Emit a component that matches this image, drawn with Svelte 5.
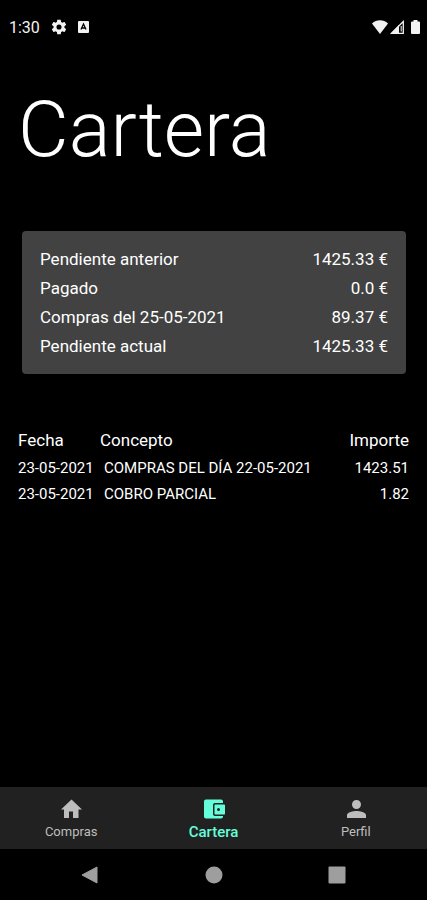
<script lang="ts">
	type Movimiento = { fecha: string; concepto: string; importe: string };

	const resumen = [
		{ label: 'Pendiente anterior', importe: '1425.33 €' },
		{ label: 'Pagado', importe: '0.0 €' },
		{ label: 'Compras del 25-05-2021', importe: '89.37 €' },
		{ label: 'Pendiente actual', importe: '1425.33 €' }
	];

	const movimientos: Movimiento[] = [
		{ fecha: '23-05-2021', concepto: 'COMPRAS DEL DÍA 22-05-2021', importe: '1423.51' },
		{ fecha: '23-05-2021', concepto: 'COBRO PARCIAL', importe: '1.82' }
	];

	const tabs = [
		{ id: 'compras', label: 'Compras', icon: 'M10 21v-6.500h4V21h5.500v-8.500H23L12.500 2.500 2 12.500h3V21z' },
		{
			id: 'cartera',
			label: 'Cartera',
			icon: 'M20 2.500H5c-1.100 0-2 .9-2 2v15c0 1.100.9 2 2 2h15c1.100 0 2-.9 2-2V19h-8c-1.100 0-2-.9-2-2V8c0-1.100.9-2 2-2h8V4.500c0-1.100-.9-2-2-2zM14.500 7.500c-.6 0-1 .4-1 1v8c0 .6.4 1 1 1H23c.6 0 1-.4 1-1v-8c0-.6-.4-1-1-1zM17.500 14a1.500 1.500 0 1 1 0-3 1.500 1.500 0 0 1 0 3z'
		},
		{
			id: 'perfil',
			label: 'Perfil',
			icon: 'M12.500 12c2.600 0 4.500-2 4.500-4.500S15.100 3 12.500 3 8 5 8 7.500 9.900 12 12.500 12zm0 2c-3 0-9.500 1.300-9.500 4v3h19v-3c0-2.700-6.500-4-9.500-4z'
		}
	];

	let activeTab = $state('cartera');
</script>

<div class="screen">
	<header class="status-bar">
		<span class="clock">1:30</span>
		<svg width="16" height="16" viewBox="1 1 22 22" aria-hidden="true">
			<path
				fill="currentColor"
				fill-rule="evenodd"
				d="M19.430 12.980c.04-.32.07-.64.07-.98s-.03-.66-.07-.98l2.110-1.650c.19-.15.24-.42.12-.64l-2-3.460c-.12-.22-.39-.3-.61-.22l-2.490 1c-.52-.4-1.080-.73-1.690-.98l-.38-2.650C14.460 2.180 14.250 2 14 2h-4c-.25 0-.46.18-.49.42l-.38 2.650c-.61.25-1.170.59-1.690.98l-2.490-1c-.23-.09-.49 0-.61.22l-2 3.460c-.13.22-.07.49.12.64l2.110 1.650c-.04.32-.07.65-.07.98s.03.66.07.98l-2.110 1.650c-.19.15-.24.42-.12.64l2 3.460c.12.22.39.3.61.22l2.490-1c.52.4 1.080.73 1.690.98l.38 2.650c.03.24.24.42.49.42h4c.25 0 .46-.18.49-.42l.38-2.650c.61-.25 1.170-.59 1.690-.98l2.490 1c.23.09.49 0 .61-.22l2-3.460c.12-.22.07-.49-.12-.64zM12 15.500a3.500 3.500 0 1 1 0-7 3.500 3.500 0 0 1 0 7z"
			/>
		</svg>
		<svg width="11" height="12" viewBox="0 0 11 12" aria-hidden="true">
			<rect width="11" height="12" rx="1" fill="currentColor" />
			<path d="M3 8.500 5.500 3 8 8.500M4 7h3" fill="none" stroke="#000" stroke-width="1.300" />
		</svg>
		<div class="signals">
			<svg width="16" height="14" viewBox="0 0 16 14" aria-hidden="true">
				<path d="M0 3.500C4.500-.8 11.500-.8 16 3.500L8 14z" fill="currentColor" />
			</svg>
			<svg width="14" height="14" viewBox="0 0 14 14" aria-hidden="true">
				<path d="M1.500 13.300 13.300 1.500v11.800z" fill="none" stroke="currentColor" stroke-width="1.300" />
				<path d="M1 13.500 9 5v8.500z" fill="currentColor" />
				<path d="M11.200 6v5.500" stroke="currentColor" />
			</svg>
			<svg class="battery" width="9" height="14" viewBox="0 0 9 14" aria-hidden="true">
				<path d="M2.500 0h4v1.500H8q1 0 1 1V13q0 1-1 1H1q-1 0-1-1V2.500q0-1 1-1h1.500z" fill="currentColor" />
			</svg>
		</div>
	</header>

	<main>
		<h1>Cartera</h1>

		<dl class="resumen">
			{#each resumen as linea}
				<div class="linea">
					<dt>{linea.label}</dt>
					<dd>{linea.importe}</dd>
				</div>
			{/each}
		</dl>

		<table>
			<thead>
				<tr>
					<th class="fecha">Fecha</th>
					<th>Concepto</th>
					<th class="importe">Importe</th>
				</tr>
			</thead>
			<tbody>
				{#each movimientos as mov}
					<tr>
						<td class="fecha">{mov.fecha}</td>
						<td class="concepto">{mov.concepto}</td>
						<td class="importe">{mov.importe}</td>
					</tr>
				{/each}
			</tbody>
		</table>
	</main>

	<nav class="tabs">
		{#each tabs as tab}
			<button
				class="tab"
				class:active={activeTab === tab.id}
				aria-current={activeTab === tab.id ? 'page' : undefined}
				onclick={() => (activeTab = tab.id)}
			>
				<svg viewBox="0 0 24 24" aria-hidden="true">
					<path d={tab.icon} fill="currentColor" fill-rule="evenodd" />
				</svg>
				<span>{tab.label}</span>
			</button>
		{/each}
	</nav>

	<div class="system-nav">
		<button aria-label="Atrás">
			<svg width="18" height="18" viewBox="0 0 18 18" aria-hidden="true">
				<path d="M1 9 16 1v16z" fill="currentColor" stroke="currentColor" stroke-linejoin="round" />
			</svg>
		</button>
		<button aria-label="Inicio">
			<svg width="18" height="18" viewBox="0 0 18 18" aria-hidden="true">
				<circle cx="9" cy="9" r="8.500" fill="currentColor" />
			</svg>
		</button>
		<button aria-label="Recientes">
			<svg width="18" height="18" viewBox="0 0 18 18" aria-hidden="true">
				<rect x=".5" y=".5" width="17" height="17" rx="1" fill="currentColor" />
			</svg>
		</button>
	</div>
</div>

<style>
	:global(body) {
		margin: 0;
		background: #000;
	}

	.screen {
		display: flex;
		flex-direction: column;
		min-height: 100vh;
		background: #000;
		color: #fff;
		font-family: Roboto, sans-serif;
	}

	.status-bar {
		display: flex;
		align-items: center;
		height: 54px;
		padding: 0 7px 0 9px;
		gap: 11px;
		color: #f2f2f2;
	}

	.clock {
		font-size: 16px;
	}

	.signals {
		display: flex;
		align-items: center;
		gap: 2px;
		margin-left: auto;
	}

	.battery {
		margin-left: 5px;
	}

	main {
		flex: 1;
		padding: 0 18px;
	}

	h1 {
		margin: 29px 0 55px;
		font-size: 78px;
		font-weight: 300;
		line-height: 93px;
	}

	.resumen {
		margin: 0 3px 0 4px;
		padding: 14px 18px 13px;
		border-radius: 4px;
		background: #424242;
		color: #fff;
		font-size: 17px;
		line-height: 29px;
	}

	.linea {
		display: flex;
		justify-content: space-between;
	}

	dd {
		margin: 0;
	}

	table {
		width: 100%;
		margin-top: 51px;
		border-collapse: collapse;
		color: #fff;
		font-size: 15px;
		line-height: 26px;
	}

	th,
	td {
		padding: 0;
		text-align: left;
	}

	th {
		font-size: 17px;
		font-weight: 400;
		line-height: 30px;
	}

	.fecha {
		width: 82px;
	}

	.concepto {
		padding-left: 4px;
	}

	.importe {
		text-align: right;
	}

	.tabs {
		display: flex;
		height: 62px;
		background: #212121;
	}

	.tab {
		display: flex;
		flex: 1;
		flex-direction: column;
		align-items: center;
		justify-content: center;
		gap: 2px;
		padding: 1px 0 0;
		border: none;
		background: none;
		color: #bdbdbd;
		font-family: inherit;
		font-size: 13px;
		line-height: 18px;
		cursor: pointer;
	}

	.tab svg {
		width: 24px;
		height: 24px;
	}

	.tab.active {
		color: #64ffda;
		font-size: 15px;
		font-weight: 500;
	}

	.system-nav {
		display: flex;
		align-items: center;
		justify-content: space-between;
		height: 51px;
		padding: 0 81px;
	}

	.system-nav button {
		display: flex;
		padding: 0;
		border: none;
		background: none;
		color: #9e9e9e;
		cursor: pointer;
	}
</style>
